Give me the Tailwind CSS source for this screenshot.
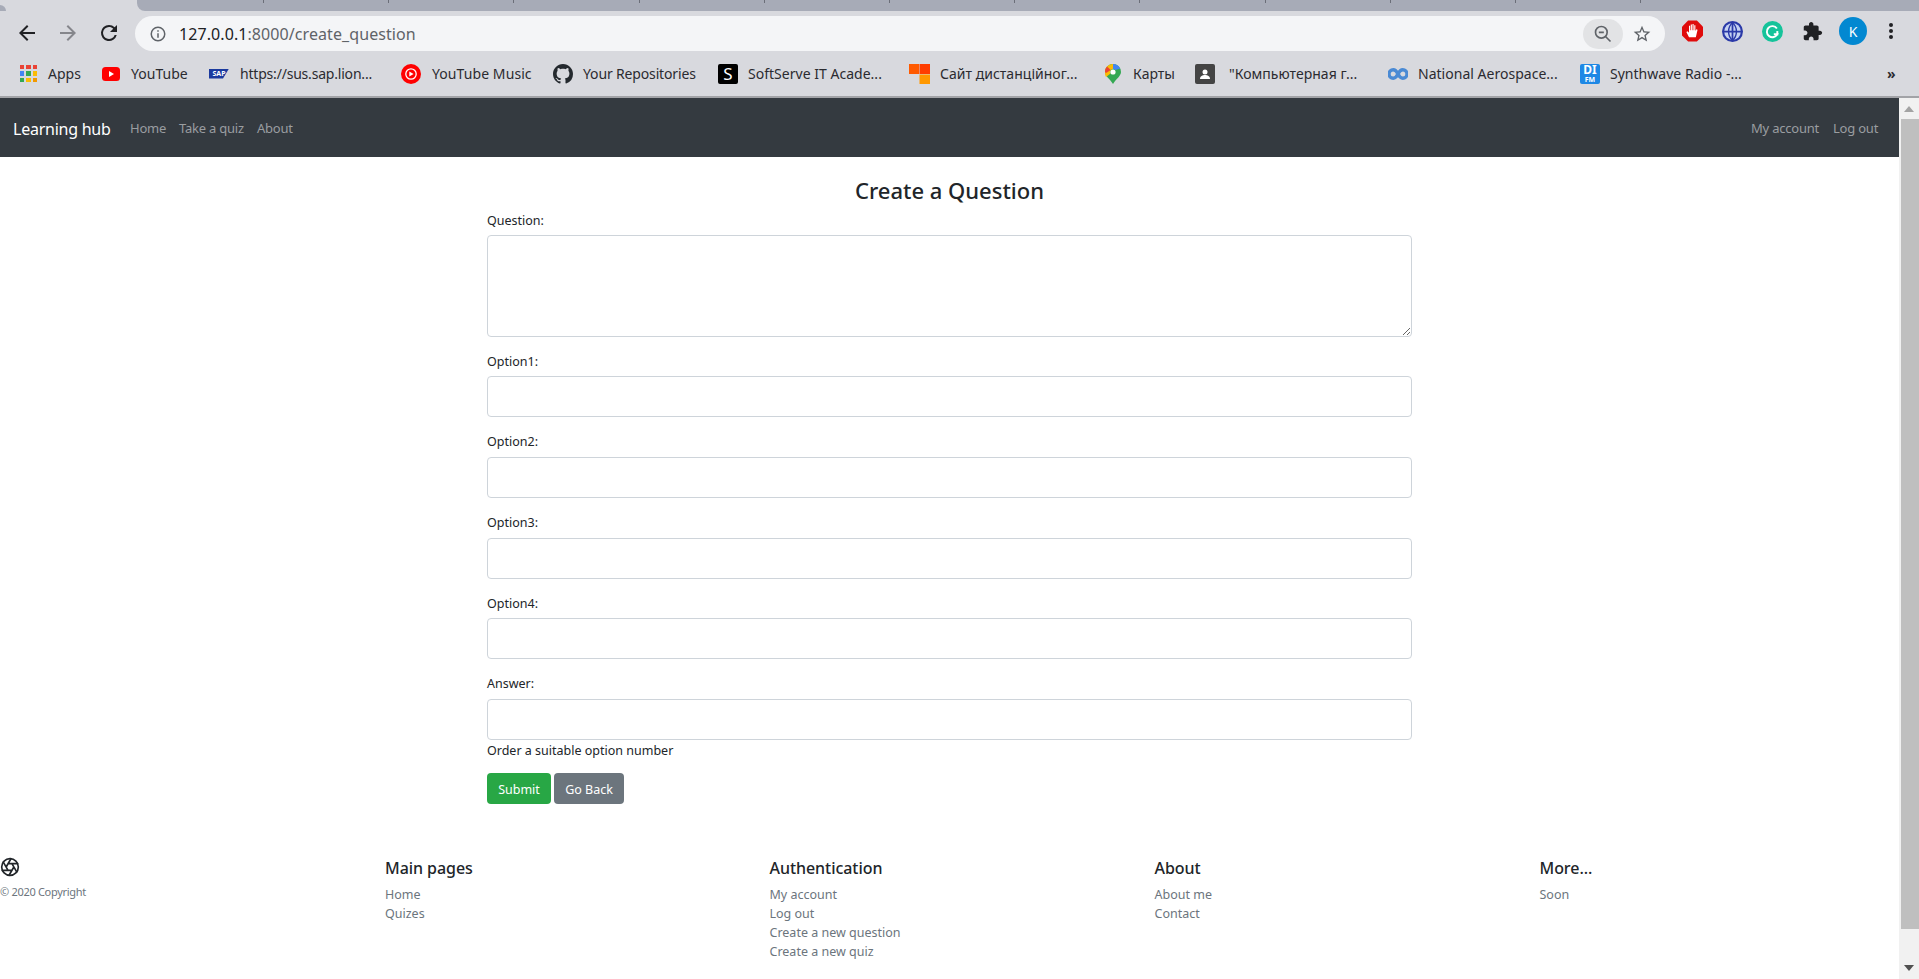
<!DOCTYPE html>
<html lang="en">
<head>
    <meta charset="UTF-8">
    <title>Create a Question</title>
    <script src="https://cdn.jsdelivr.net/npm/@tailwindcss/browser@4"></script>
</head>
<body class="h-screen overflow-hidden bg-white font-['Noto_Sans',sans-serif] text-[#212529]">

    <!-- browser chrome -->
    <div class="bg-[#d8d9de] h-[96px] text-[#202124]">
        <!-- tab strip -->
        <div class="relative h-[11px] pl-[137px]">
            <div class="absolute left-0 bottom-0 w-[6px] h-[6px] bg-[#a7abb7] rounded-tr-[6px]"></div>
            <div class="h-full bg-[#a7abb7] rounded-bl-[8px] flex items-start">
                <div class="w-[126px] h-[3px] shrink-0"></div>
                <div class="w-[125.2px] h-[3px] shrink-0 border-l border-[#6b6e78]"></div>
                <div class="w-[125.2px] h-[3px] shrink-0 border-l border-[#6b6e78]"></div>
                <div class="w-[125.2px] h-[3px] shrink-0 border-l border-[#6b6e78]"></div>
                <div class="w-[125.2px] h-[3px] shrink-0 border-l border-[#6b6e78]"></div>
                <div class="w-[125.2px] h-[3px] shrink-0 border-l border-[#6b6e78]"></div>
                <div class="w-[125.2px] h-[3px] shrink-0 border-l border-[#6b6e78]"></div>
                <div class="w-[125.2px] h-[3px] shrink-0 border-l border-[#6b6e78]"></div>
                <div class="w-[125.2px] h-[3px] shrink-0 border-l border-[#6b6e78]"></div>
                <div class="w-[125.2px] h-[3px] shrink-0 border-l border-[#6b6e78]"></div>
                <div class="w-[125.2px] h-[3px] shrink-0 border-l border-[#6b6e78]"></div>
                <div class="w-[125.2px] h-[3px] shrink-0 border-l border-[#6b6e78]"></div>
                <div class="w-[125.2px] h-[3px] shrink-0 border-l border-[#6b6e78]"></div>
            </div>
        </div>

        <!-- toolbar -->
        <div class="h-[40px] flex items-end">
            <div class="h-[35px] w-[135px] shrink-0 flex items-center pl-[15px] gap-[17px] pb-[1px]">
                <svg class="w-[24px] h-[24px]" viewBox="0 0 24 24" fill="#202124"><path d="M20 11H7.830l5.590-5.590L12 4l-8 8 8 8 1.410-1.410L7.830 13H20v-2z"/></svg>
                <svg class="w-[24px] h-[24px]" viewBox="0 0 24 24" fill="#85868b"><path d="M12 4l-1.410 1.410L16.170 11H4v2h12.170l-5.580 5.590L12 20l8-8z"/></svg>
                <svg class="w-[24px] h-[24px]" viewBox="0 0 24 24" fill="#202124"><path d="M17.650 6.350A7.960 7.960 0 0 0 12 4a8 8 0 1 0 7.730 10h-2.080A6 6 0 1 1 12 6c1.660 0 3.140.69 4.220 1.780L13 11h7V4l-2.350 2.350z"/></svg>
            </div>
            <div class="h-[35px] w-[1530px] shrink-0 rounded-full bg-[#f4f5f7] flex items-center pl-[14px]">
                <svg class="w-[18px] h-[18px] shrink-0" viewBox="0 0 24 24" fill="#5f6368"><path d="M11 7h2v2h-2zm0 4h2v6h-2zm1-9a10 10 0 1 0 0 20 10 10 0 0 0 0-20zm0 18a8 8 0 1 1 0-16 8 8 0 0 1 0 16z"/></svg>
                <div class="ml-[12px] text-[16px] tracking-[0.08px] whitespace-nowrap text-[#5f6368]"><span class="text-[#202124]">127.0.0.1</span>:8000/create_question</div>
                <div class="ml-auto w-[40px] h-[30px] rounded-full bg-[#e2e3e5] flex items-center justify-center">
                    <svg class="w-[20px] h-[20px]" viewBox="0 0 24 24" fill="none" stroke="#5f6368" stroke-width="2"><circle cx="10" cy="10" r="7"/><path d="M15 15l6 6M7 10h6"/></svg>
                </div>
                <svg class="ml-[9px] mr-[13px] w-[20px] h-[20px]" viewBox="0 0 24 24" fill="#5f6368"><path d="M22 9.240l-7.190-.62L12 2 9.190 8.630 2 9.240l5.460 4.730L5.820 21 12 17.270 18.180 21l-1.630-7.030L22 9.240zM12 15.400l-3.760 2.270 1-4.280-3.320-2.880 4.380-.38L12 6.100l1.710 4.040 4.380.38-3.320 2.880 1 4.280L12 15.400z"/></svg>
            </div>
            <div class="h-[40px] flex-1 flex items-center pl-[17px]">
                <svg class="w-[21px] h-[22px] shrink-0" viewBox="0 0 24 24"><path fill="#e00b0b" d="M7 0h10l7 7v10l-7 7H7l-7-7V7z"/><path fill="#fff" d="M8 19l-3-6 1.500-.8L8 14V6h1.300v5H10V4.500h1.300V11H12V4h1.300v7h.7V5.500h1.300V12l1-2 1.500.5-2 8.500z"/></svg>
                <svg class="ml-[19px] w-[21px] h-[21px] shrink-0" viewBox="0 0 24 24" fill="none"><circle cx="12" cy="12" r="12" fill="#2b3aa8"/><circle cx="12" cy="12" r="9.500" fill="#c6d2f2"/><path d="M12 1v22M1 12h22" stroke="#2b3aa8" stroke-width="2"/><path d="M12 2c-6 5-6 15 0 20M12 2c6 5 6 15 0 20" stroke="#2b3aa8" stroke-width="1.600"/></svg>
                <svg class="ml-[19px] w-[21px] h-[21px] shrink-0" viewBox="0 0 24 24" fill="none"><circle cx="12" cy="12" r="12" fill="#15c39a"/><path d="M17 8.500A6.300 6.300 0 1 0 17.500 15h-4" stroke="#fff" stroke-width="2.200"/><path d="M17.500 11.500v5" stroke="#fff" stroke-width="2.200"/></svg>
                <svg class="ml-[19px] w-[21px] h-[21px] shrink-0" viewBox="0 0 24 24" fill="#202124"><path d="M20.500 11H19V7c0-1.100-.9-2-2-2h-4V3.500C13 2.120 11.880 1 10.500 1S8 2.120 8 3.500V5H4c-1.100 0-1.990.9-1.990 2v3.800H3.500c1.490 0 2.700 1.210 2.700 2.700s-1.210 2.700-2.700 2.700H2V20c0 1.100.9 2 2 2h3.800v-1.500c0-1.490 1.210-2.700 2.700-2.700 1.490 0 2.700 1.210 2.700 2.700V22H17c1.100 0 2-.9 2-2v-4h1.500c1.380 0 2.500-1.120 2.500-2.500S21.880 11 20.500 11z"/></svg>
                <div class="ml-[16px] w-[28px] h-[28px] shrink-0 rounded-full bg-[#0288d1] text-white text-[14px] flex items-center justify-center">K</div>
                <svg class="ml-[14px] w-[20px] h-[20px] shrink-0" viewBox="0 0 20 20" fill="#202124"><circle cx="10" cy="4" r="2"/><circle cx="10" cy="10" r="2"/><circle cx="10" cy="16" r="2"/></svg>
            </div>
        </div>

        <!-- bookmarks -->
        <div class="h-[45px] relative flex items-center text-[14px] tracking-[0.02px] whitespace-nowrap text-[#2b2b30]">
            <div class="ml-[20px] w-[17px] h-[17px] shrink-0 grid grid-cols-3 gap-[2px]">
                <i class="bg-[#ea4335]"></i><i class="bg-[#ea4335]"></i><i class="bg-[#ea4335]"></i>
                <i class="bg-[#4285f4]"></i><i class="bg-[#34a853]"></i><i class="bg-[#fbbc04]"></i>
                <i class="bg-[#34a853]"></i><i class="bg-[#fbbc04]"></i><i class="bg-[#f29900]"></i>
            </div>
            <span class="ml-[11px] w-[33px] shrink-0">Apps</span>

            <svg class="ml-[21px] w-[18px] h-[18px] shrink-0" viewBox="0 0 18 18"><rect y="2" width="18" height="14" rx="3.500" fill="#f00"/><path d="M7 6l5 3-5 3z" fill="#fff"/></svg>
            <span class="ml-[11px] w-[58px] shrink-0">YouTube</span>

            <div class="ml-[20px] w-[20px] h-[10px] shrink-0 bg-[#1b3a9e] text-white text-[7px] leading-[10px] font-bold text-center tracking-normal [clip-path:polygon(0_0,100%_0,70%_100%,0_100%)]">SAP</div>
            <span class="ml-[11px] w-[133px] shrink-0 tracking-[-0.2px]">https://sus.sap.lion...</span>

            <svg class="ml-[28px] w-[20px] h-[20px] shrink-0" viewBox="0 0 20 20" fill="none"><circle cx="10" cy="10" r="10" fill="#f00"/><circle cx="10" cy="10" r="5.200" stroke="#fff" stroke-width="1.300"/><path d="M8.300 7.400l4.300 2.600-4.300 2.600z" fill="#fff"/></svg>
            <span class="ml-[11px] w-[99px] shrink-0 tracking-[0.08px]">YouTube Music</span>

            <svg class="ml-[22px] w-[20px] h-[20px] shrink-0" viewBox="0 0 16 16" fill="#24292e"><path d="M8 0C3.580 0 0 3.580 0 8c0 3.540 2.290 6.530 5.470 7.590.4.070.55-.17.55-.38 0-.19-.01-.82-.01-1.490-2.010.37-2.530-.49-2.690-.94-.09-.23-.48-.94-.82-1.130-.28-.15-.68-.52-.01-.53.63-.01 1.080.58 1.230.82.72 1.210 1.870.87 2.330.66.070-.52.28-.87.51-1.070-1.780-.2-3.640-.89-3.640-3.950 0-.87.31-1.590.82-2.150-.08-.2-.36-1.020.08-2.120 0 0 .67-.21 2.200.82.64-.18 1.320-.27 2-.27.68 0 1.360.09 2 .27 1.530-1.040 2.200-.82 2.200-.82.44 1.100.16 1.920.08 2.120.51.56.82 1.270.82 2.150 0 3.070-1.870 3.750-3.650 3.950.29.25.54.73.54 1.480 0 1.070-.01 1.930-.01 2.200 0 .21.15.46.55.38A8.013 8.013 0 0 0 16 8c0-4.420-3.580-8-8-8z"/></svg>
            <span class="ml-[10px] w-[113px] shrink-0 tracking-[-0.15px]">Your Repositories</span>

            <div class="ml-[22px] w-[20px] h-[20px] shrink-0 rounded-[2px] bg-black text-white text-[17px] leading-[20px] text-center">S</div>
            <span class="ml-[10px] w-[134px] shrink-0">SoftServe IT Acade...</span>

            <svg class="ml-[27px] w-[21px] h-[20px] shrink-0" viewBox="0 0 21 20"><rect width="10" height="10" fill="#ff5a00"/><rect x="10.500" width="10.500" height="10" fill="#ff3d00"/><rect x="10.500" y="10.500" width="10.500" height="9.500" fill="#ff9800"/></svg>
            <span class="ml-[10px] w-[138px] shrink-0">Сайт дистанційног...</span>

            <svg class="ml-[27px] w-[16px] h-[20px] shrink-0" viewBox="0 0 16 20"><path d="M8 0a8 8 0 0 1 8 8c0 4-5 7-8 12C5 15 0 12 0 8a8 8 0 0 1 8-8z" fill="#34a853"/><path d="M2 2.500A8 8 0 0 1 8 0v5a3 3 0 0 0-2.500 4.500L1 13C0 11.500 0 9.500 0 8a8 8 0 0 1 2-5.500z" fill="#fbbc04"/><path d="M8 0a8 8 0 0 1 7.200 4.500L10.500 6A3 3 0 0 0 8 5z" fill="#4285f4"/><path d="M2 2.500L5.800 6 1 9 0 8a8 8 0 0 1 2-5.500z" fill="#ea4335"/><circle cx="8" cy="8" r="2.600" fill="#fff"/></svg>
            <span class="ml-[12px] w-[40px] shrink-0">Карты</span>

            <div class="ml-[22px] w-[20px] h-[20px] shrink-0 rounded-[2px] bg-[#444] flex items-center justify-center">
                <svg class="w-[14px] h-[14px]" viewBox="0 0 14 14" fill="#fff"><circle cx="7" cy="5" r="2.500"/><path d="M2 12c0-3 2.500-4 5-4s5 1 5 4z"/></svg>
            </div>
            <span class="ml-[14px] w-[134px] shrink-0">"Компьютерная г...</span>

            <svg class="ml-[25px] w-[20px] h-[12px] shrink-0" viewBox="0 0 20 12" fill="none" stroke="#4a8ad4" stroke-width="3.400"><path d="M10 6C8.500 3 7 1.800 5.200 1.800a4.200 4.200 0 0 0 0 8.400C7 10.200 8.500 9 10 6zm0 0c1.500-3 3-4.200 4.800-4.200a4.200 4.200 0 0 1 0 8.400C13 10.200 11.500 9 10 6z"/></svg>
            <span class="ml-[10px] w-[139px] shrink-0">National Aerospace...</span>

            <div class="ml-[23px] w-[20px] h-[20px] shrink-0 rounded-[2px] bg-[#1e88e5] text-white text-center font-bold leading-none overflow-hidden tracking-normal">
                <div class="text-[12px] leading-[12px]">DI</div>
                <div class="text-[7px] leading-[8px]">FM</div>
            </div>
            <span class="ml-[10px] w-[133px] shrink-0">Synthwave Radio -...</span>

            <span class="ml-[144px] shrink-0 text-[14px] font-bold">»</span>
        </div>
    </div>
    <div class="h-[2px] bg-[#a2a3a7]"></div>

    <div class="flex h-[881px]">
        <div class="flex-1 min-w-0 overflow-hidden">
            <!-- navbar -->
            <nav class="h-[59px] bg-[#343a40] flex items-center pl-[13px] pr-[21px] pt-[2px] text-[13px] tracking-[-0.22px] text-[#9a9da0] whitespace-nowrap">
                <a class="w-[117px] shrink-0 text-[16px] tracking-[-0.25px] text-white">Learning hub</a>
                <a class="w-[49px] shrink-0">Home</a>
                <a class="w-[78px] shrink-0">Take a quiz</a>
                <a>About</a>
                <a class="ml-auto w-[82px] shrink-0">My account</a>
                <a class="w-[45px] shrink-0">Log out</a>
            </nav>

            <!-- form -->
            <main class="w-[925px] ml-[487px]">
                <h3 class="h-[53px] pt-[17px] text-center text-[22px] leading-[32px] font-medium">Create a Question</h3>
                <form class="text-[12.5px]">
                    <div class="mb-[14px]">
                        <label class="block h-[20px] leading-[22px] mb-[5px]">Question:</label>
                        <textarea class="block w-full h-[102px] border border-[#ced4da] rounded-[4px] bg-white"></textarea>
                    </div>
                    <div class="mb-[14.75px]">
                        <label class="block h-[20px] leading-[22px] mb-[5px]">Option1:</label>
                        <input type="text" class="block w-full h-[41px] border border-[#ced4da] rounded-[4px] bg-white">
                    </div>
                    <div class="mb-[14.75px]">
                        <label class="block h-[20px] leading-[20px] mb-[5px]">Option2:</label>
                        <input type="text" class="block w-full h-[41px] border border-[#ced4da] rounded-[4px] bg-white">
                    </div>
                    <div class="mb-[14.75px]">
                        <label class="block h-[20px] leading-[20px] mb-[5px]">Option3:</label>
                        <input type="text" class="block w-full h-[41px] border border-[#ced4da] rounded-[4px] bg-white">
                    </div>
                    <div class="mb-[14.75px]">
                        <label class="block h-[20px] leading-[22px] mb-[5px]">Option4:</label>
                        <input type="text" class="block w-full h-[41px] border border-[#ced4da] rounded-[4px] bg-white">
                    </div>
                    <div>
                        <label class="block h-[20px] leading-[20px] mb-[5px]">Answer:</label>
                        <input type="text" class="block w-full h-[41px] border border-[#ced4da] rounded-[4px] bg-white">
                    </div>
                    <p class="h-[20px] mt-[1px] leading-[20px]">Order a suitable option number</p>
                    <div class="mt-[12px] flex gap-[3px]">
                        <button type="button" class="w-[64px] h-[31px] pt-[3px] rounded-[4px] bg-[#28a745] text-white">Submit</button>
                        <button type="button" class="w-[70px] h-[31px] pt-[3px] rounded-[4px] bg-[#6c757d] text-white">Go Back</button>
                    </div>
                </form>
            </main>

            <!-- footer -->
            <footer class="mt-[52px] grid grid-cols-[385px_384.5px_385px_385px_1fr] text-[12.5px] text-[#6c757d]">
                <div class="pt-[1px]">
                    <svg class="w-[20px] h-[20px]" viewBox="0 0 24 24" fill="none" stroke="#212529" stroke-width="2" stroke-linecap="round" stroke-linejoin="round"><circle cx="12" cy="12" r="10"/><path d="M14.310 8l5.740 9.940M9.690 8h11.480M7.380 12l5.740-9.940M9.690 16L3.950 6.060M14.310 16H2.830M16.620 12l-5.740 9.940"/></svg>
                    <small class="block mt-[7px] text-[11px] leading-[16px] tracking-[-0.3px]">© 2020 Copyright</small>
                </div>
                <div>
                    <h5 class="h-[24px] mb-[5px] text-[16px] leading-[24px] font-medium tracking-[-0.05px] text-[#212529]">Main pages</h5>
                    <a class="block h-[19px] leading-[19px]">Home</a>
                    <a class="block h-[19px] leading-[19px]">Quizes</a>
                </div>
                <div>
                    <h5 class="h-[24px] mb-[5px] text-[16px] leading-[24px] font-medium tracking-[-0.05px] text-[#212529]">Authentication</h5>
                    <a class="block h-[19px] leading-[19px]">My account</a>
                    <a class="block h-[19px] leading-[19px]">Log out</a>
                    <a class="block h-[19px] leading-[19px]">Create a new question</a>
                    <a class="block h-[19px] leading-[19px]">Create a new quiz</a>
                </div>
                <div>
                    <h5 class="h-[24px] mb-[5px] text-[16px] leading-[24px] font-medium tracking-[-0.05px] text-[#212529]">About</h5>
                    <a class="block h-[19px] leading-[19px]">About me</a>
                    <a class="block h-[19px] leading-[19px]">Contact</a>
                </div>
                <div>
                    <h5 class="h-[24px] mb-[5px] text-[16px] leading-[24px] font-medium tracking-[-0.05px] text-[#212529]">More...</h5>
                    <a class="block h-[19px] leading-[19px]">Soon</a>
                </div>
            </footer>
        </div>

        <!-- scrollbar -->
        <div class="w-[20px] shrink-0 bg-[#f1f1f1] flex flex-col items-end">
            <div class="w-full h-[21px] flex items-center justify-center">
                <svg class="w-[10px] h-[6px]" viewBox="0 0 10 6" fill="#a3a3a3"><path d="M5 0l5 6H0z"/></svg>
            </div>
            <div class="w-[18px] h-[810px] bg-[#bfbfbf]"></div>
            <div class="w-full flex-1 flex items-end justify-center pb-[8px]">
                <svg class="w-[10px] h-[6px]" viewBox="0 0 10 6" fill="#505050"><path d="M5 6L0 0h10z"/></svg>
            </div>
        </div>
    </div>
</body>
</html>
